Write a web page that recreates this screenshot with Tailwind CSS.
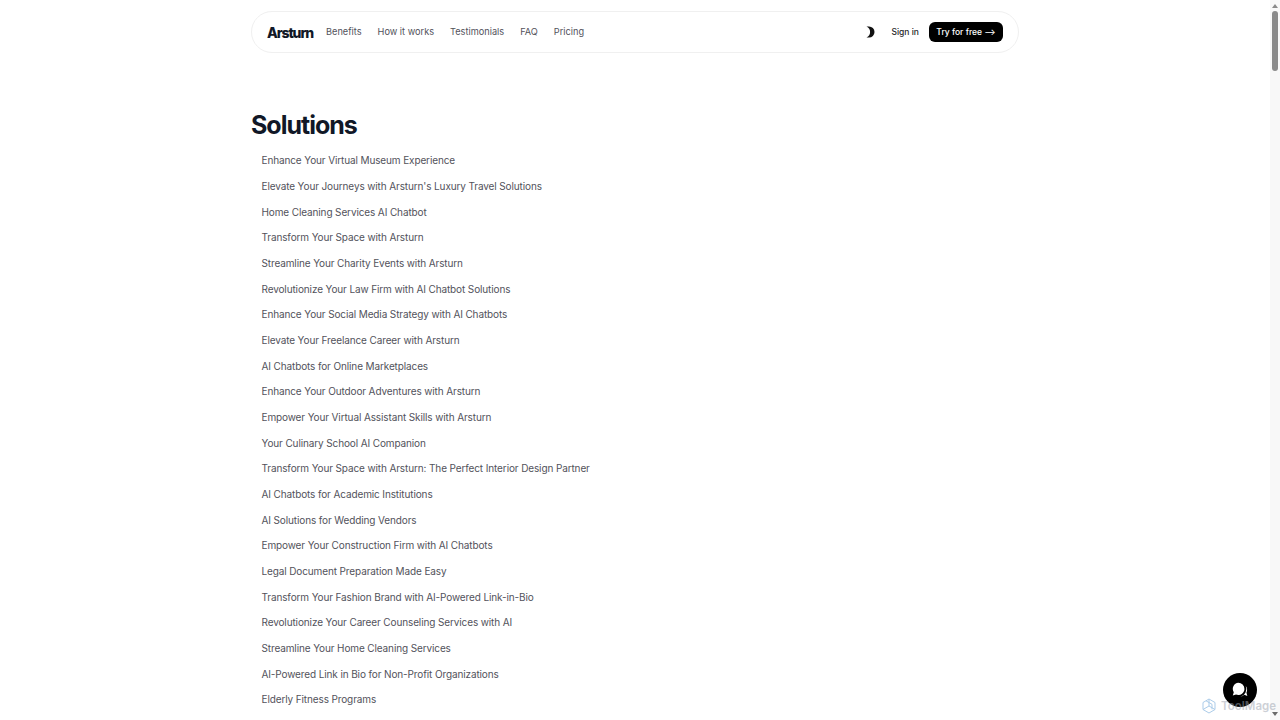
<!DOCTYPE html>
<html lang="en">
<head>
<meta charset="UTF-8">
<title>Solutions - Arsturn</title>
<script src="https://cdn.jsdelivr.net/npm/@tailwindcss/browser@4"></script>
</head>
<body class="h-[720px] overflow-hidden bg-white font-['Inter',sans-serif]">
<div class="flex h-[720px]">
  <main class="h-full flex-1 overflow-hidden">
    <div class="ml-[251px] w-[768px] pt-[11px]">
      <header class="flex h-[42px] items-center rounded-[21px] border border-[#f0f0f0] pl-[15px] pr-[15px]">
        <a class="text-[14px] font-extrabold tracking-[-1.1px] text-[#111827]">Arsturn</a>
        <nav class="ml-[13px] flex gap-4 text-[9.2px] text-[#52525b]">
          <a>Benefits</a>
          <a>How it works</a>
          <a>Testimonials</a>
          <a>FAQ</a>
          <a>Pricing</a>
        </nav>
        <svg class="ml-auto" width="12" height="12" viewBox="0 0 12 12"><path d="M2.5 .5h2.5a5.5 5.5 0 0 1 0 11H2.5a6 6 0 0 0 0-11z" fill="#111"/></svg>
        <a class="ml-[15px] text-[8.5px] font-medium text-[#27272a]">Sign in</a>
        <a class="ml-[10px] flex h-5 w-[74px] items-center justify-center rounded-md bg-black text-[8.5px] font-medium text-white">Try for free ⟶</a>
      </header>
      <h1 class="mt-[56px] text-[25px] leading-[32px] font-bold tracking-[-1px] text-[#111827]">Solutions</h1>
      <ul class="mt-[7.25px] flex flex-col pl-[10.5px] text-[10px] leading-[25.67px] tracking-[-0.12px] text-[#52525b]">
        <li>Enhance Your Virtual Museum Experience</li>
        <li>Elevate Your Journeys with Arsturn's Luxury Travel Solutions</li>
        <li>Home Cleaning Services AI Chatbot</li>
        <li>Transform Your Space with Arsturn</li>
        <li>Streamline Your Charity Events with Arsturn</li>
        <li>Revolutionize Your Law Firm with AI Chatbot Solutions</li>
        <li>Enhance Your Social Media Strategy with AI Chatbots</li>
        <li>Elevate Your Freelance Career with Arsturn</li>
        <li>AI Chatbots for Online Marketplaces</li>
        <li>Enhance Your Outdoor Adventures with Arsturn</li>
        <li>Empower Your Virtual Assistant Skills with Arsturn</li>
        <li>Your Culinary School AI Companion</li>
        <li>Transform Your Space with Arsturn: The Perfect Interior Design Partner</li>
        <li>AI Chatbots for Academic Institutions</li>
        <li>AI Solutions for Wedding Vendors</li>
        <li>Empower Your Construction Firm with AI Chatbots</li>
        <li>Legal Document Preparation Made Easy</li>
        <li>Transform Your Fashion Brand with AI-Powered Link-in-Bio</li>
        <li>Revolutionize Your Career Counseling Services with AI</li>
        <li>Streamline Your Home Cleaning Services</li>
        <li>AI-Powered Link in Bio for Non-Profit Organizations</li>
        <li>Elderly Fitness Programs</li>
      </ul>
    </div>
  </main>
  <div class="flex h-full w-[10px] flex-col items-center justify-between bg-[#f8f8f8] py-[4px]">
    <div class="flex flex-col items-center gap-[3px]">
      <div class="h-0 w-0 border-x-[3px] border-b-[4px] border-x-transparent border-b-[#8a8a8a]"></div>
      <div class="h-[60px] w-[6px] rounded-full bg-[#8a8a8a]"></div>
    </div>
    <div class="h-0 w-0 border-x-[3px] border-t-[4px] border-x-transparent border-t-[#6a6a6a]"></div>
  </div>
</div>
<div class="absolute right-[23px] bottom-[13px] flex h-[34px] w-[34px] items-center justify-center rounded-full bg-black">
  <svg width="20" height="20" viewBox="0 0 18 18" fill="white"><path d="M7.5 2.5a5.5 5.5 0 0 1 5.5 5.5 5.5 5.5 0 0 1-7.6 5L2.5 14l.9-3A5.5 5.5 0 0 1 7.5 2.5z"/><path d="M14.2 5.5a6 6 0 0 1 .6 6l.8 2.8-2.7 -1a6 6 0 0 1-3.4 1.7 7 7 0 0 0 4.7-9.5z"/></svg>
</div>
<div class="absolute right-[4px] bottom-[5px] flex items-center gap-[4px] opacity-50">
  <svg width="16" height="16" viewBox="0 0 16 16" fill="none" stroke="#5b9bd5" stroke-width="1"><path d="M8 1l6 3.5v7L8 15l-6-3.5v-7z"/><path d="M8 1v7l6 3.5M8 8l-6 3.5M5 2.8l6 3.5v5"/></svg>
  <span class="text-[11.5px] font-semibold text-[#9ca3af]">ToolMage</span>
</div>
</body>
</html>
